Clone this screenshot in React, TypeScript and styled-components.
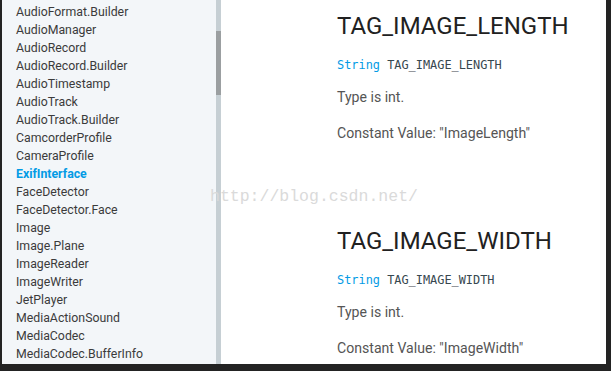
import { FC } from 'react';
import styled, { createGlobalStyle } from 'styled-components';

const GlobalStyle = createGlobalStyle`
    html, body {
        margin: 0;
        padding: 0;
        background: #232323;
    }
    * {
        box-sizing: border-box;
    }
`

const classes = [
    'AudioFormat.Builder',
    'AudioManager',
    'AudioRecord',
    'AudioRecord.Builder',
    'AudioTimestamp',
    'AudioTrack',
    'AudioTrack.Builder',
    'CamcorderProfile',
    'CameraProfile',
    'ExifInterface',
    'FaceDetector',
    'FaceDetector.Face',
    'Image',
    'Image.Plane',
    'ImageReader',
    'ImageWriter',
    'JetPlayer',
    'MediaActionSound',
    'MediaCodec',
    'MediaCodec.BufferInfo',
]

const constants = [
    { name: 'TAG_IMAGE_LENGTH', value: 'ImageLength' },
    { name: 'TAG_IMAGE_WIDTH', value: 'ImageWidth' },
]

const Frame = styled.div`
    width: 611px;
    height: 371px;
    padding: 0 5px 7px 2px;
    background: #232323;
    overflow: hidden;
`

const Window = styled.div`
    position: relative;
    display: flex;
    height: 364px;
    overflow: hidden;
`

const Sidebar = styled.nav`
    width: 214px;
    flex-shrink: 0;
    background: #f3f6f9;
    padding-top: 3px;
    overflow: hidden;
`

const NavItem = styled.div<{ $active?: boolean }>`
    padding-left: 14px;
    height: 18px;
    line-height: 18px;
    font-family: Roboto, 'Noto Sans', sans-serif;
    font-size: 12.3px;
    font-weight: ${props => props.$active ? 700 : 400};
    color: ${props => props.$active ? '#039be5' : '#3b3b3b'};
    white-space: nowrap;
`

const Track = styled.div`
    width: 5px;
    flex-shrink: 0;
    background: #c6cfd4;
    padding-top: 31px;
`

const Thumb = styled.div`
    height: 64px;
    background: #9b9fa1;
`

const Content = styled.main`
    flex: 1;
    background: #ffffff;
    padding: 12px 0 0 116px;
    font-family: Roboto, 'Noto Sans', sans-serif;
`

const Section = styled.section`
    & + & {
        margin-top: 84px;
    }
`

const Heading = styled.h3`
    margin: 0;
    font-size: 24px;
    line-height: 28px;
    font-weight: 400;
    color: #212121;
    white-space: nowrap;
`

const Signature = styled.div`
    margin-top: 17px;
    height: 16px;
    line-height: 16px;
    font-family: 'DejaVu Sans Mono', 'Liberation Mono', monospace;
    font-size: 11.9px;
    color: #37474f;
    white-space: nowrap;
`

const TypeName = styled.span`
    color: #039be5;
`

const Paragraph = styled.p`
    margin: 14px 0 0;
    height: 20px;
    line-height: 20px;
    font-size: 14.1px;
    color: #555555;
    white-space: nowrap;

    & + & {
        margin-top: 16px;
    }
`

const Watermark = styled.div`
    position: absolute;
    left: 208px;
    top: 185px;
    font-family: 'Liberation Mono', monospace;
    font-size: 16.5px;
    line-height: 24px;
    color: #dadada;
    pointer-events: none;
    white-space: nowrap;
`

const App: FC = () => {
    return (
        <Frame>
            <GlobalStyle />
            <Window>
                <Sidebar>
                    {classes.map((name) => (
                        <NavItem key={name} $active={name === 'ExifInterface'}>{name}</NavItem>
                    ))}
                </Sidebar>
                <Track>
                    <Thumb />
                </Track>
                <Content>
                    {constants.map((c) => (
                        <Section key={c.name}>
                            <Heading>{c.name}</Heading>
                            <Signature><TypeName>String</TypeName> {c.name}</Signature>
                            <Paragraph>Type is int.</Paragraph>
                            <Paragraph>Constant Value: "{c.value}"</Paragraph>
                        </Section>
                    ))}
                </Content>
                <Watermark>http://blog.csdn.net/</Watermark>
            </Window>
        </Frame>
    )
}

export default App
